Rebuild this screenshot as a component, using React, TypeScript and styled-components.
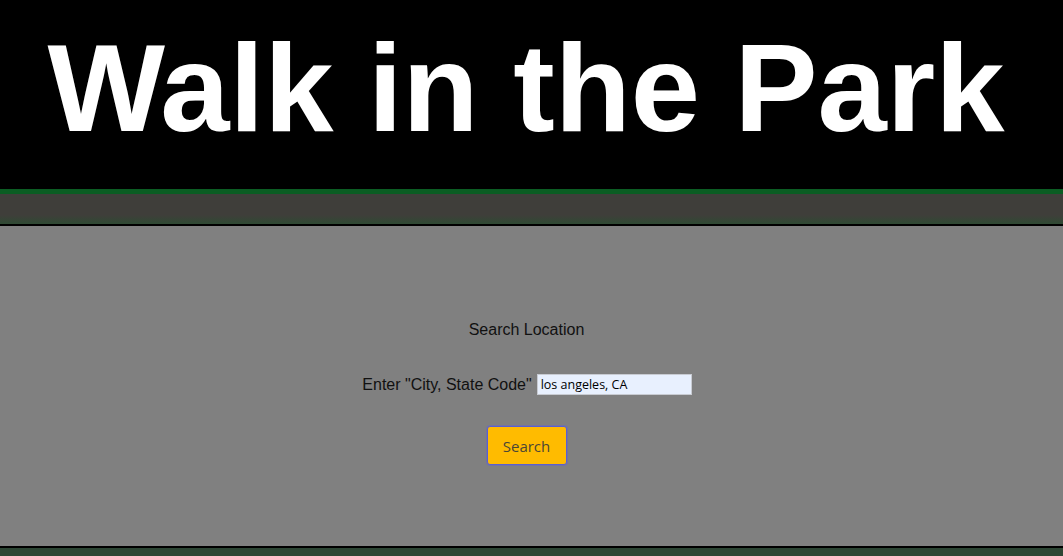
import React from "react";
import styled, { createGlobalStyle } from "styled-components";

const Global = createGlobalStyle`
  html, body { margin: 0; padding: 0; background: #2d4634; }
  body { font-family: "Liberation Sans", Arial, sans-serif; }
  * { box-sizing: border-box; }
`;

const Header = styled.header`
  height: 194px;
  background: #000;
  border-bottom: 5px solid #0b5d23;
  display: flex;
  justify-content: center;
  align-items: flex-start;
  padding: 26px 11px 0 0;
`;

const Title = styled.h1`
  margin: 0;
  color: #fff;
  font-family: "Liberation Sans", Arial, sans-serif;
  font-weight: 700;
  font-size: 124.5px;
  line-height: 1;
`;

const NavBand = styled.nav`
  height: 32px;
  background: linear-gradient(to bottom, #3f3e3a 0%, #3f3e3a 70%, #2f4a33 100%);
  border-bottom: 2px solid #000;
`;

const Main = styled.main`
  height: 322px;
  background: #808080;
  border-bottom: 2px solid #000;
  display: flex;
  flex-direction: column;
  align-items: center;
  padding: 95px 10px 0 0;
`;

const Heading = styled.div`
  font-size: 16px;
  line-height: 18px;
  color: #111;
  margin-bottom: 35px;
`;

const Row = styled.label`
  display: flex;
  align-items: center;
  gap: 5px;
  font-size: 16px;
  color: #111;
  height: 21px;
  margin-bottom: 31px;
  margin-left: 1px;
`;

const Input = styled.input`
  width: 155px;
  height: 21px;
  background: #e8f0fe;
  border: 1px solid #c8cbd2;
  padding: 0 3px;
  font-family: "Open Sans", "Noto Sans", sans-serif;
  font-size: 12.5px;
  color: #000;
  outline: none;
`;

const Button = styled.button`
  width: 80px;
  height: 39px;
  background: #ffbb00;
  border: 1px solid #5a5fd0;
  box-shadow: 0 0 0 1px rgba(95, 100, 210, 0.45);
  border-radius: 3px;
  font-family: "Open Sans", "Noto Sans", sans-serif;
  font-size: 15px;
  color: #4b4636;
  cursor: pointer;
`;

const Footer = styled.footer`
  height: 20px;
  background: #2d4634;
`;

export default function App() {
  return (
    <>
      <Global />
      <Header>
        <Title>Walk in the Park</Title>
      </Header>
      <NavBand />
      <Main>
        <Heading>Search Location</Heading>
        <Row>
          Enter "City, State Code"
          <Input defaultValue="los angeles, CA" />
        </Row>
        <Button>Search</Button>
      </Main>
      <Footer />
    </>
  );
}
